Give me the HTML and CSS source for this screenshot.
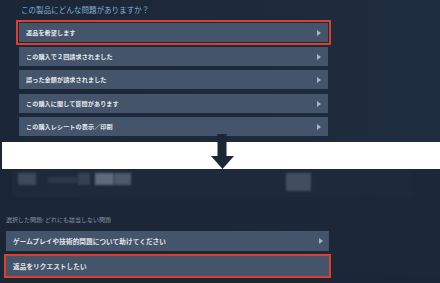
FILE: index.html
```html
<!DOCTYPE html>
<html lang="ja">
<head>
<meta charset="utf-8">
<link rel="stylesheet" href="styles.css">
</head>
<body>
<div class="page">
  <section class="top">
    <div class="title">この製品にどんな問題がありますか？</div>
    <div class="list">
      <div class="btn hl">返品を希望します<span class="tri"></span></div>
      <div class="btn">この購入で２回請求されました<span class="tri"></span></div>
      <div class="btn">誤った金額が請求されました<span class="tri"></span></div>
      <div class="btn">この購入に関して質問があります<span class="tri"></span></div>
      <div class="btn">この購入レシートの表示／印刷<span class="tri"></span></div>
    </div>
  </section>
  <div class="band">
    <svg class="arrow" width="24" height="36" viewBox="0 0 24 36">
      <rect x="6.5" y="0" width="9" height="24" fill="#1b2636"/>
      <polygon points="0,22 23,22 11.5,35" fill="#1b2636"/>
    </svg>
  </div>
  <section class="bottom">
    <div class="card">
      <span class="blur b1"></span>
      <span class="blur b2"></span>
      <span class="blur b3"></span>
      <span class="blur b4"></span>
      <span class="blur b5"></span>
      <span class="blur b6"></span>
    </div>
    <div class="label">選択した問題: どれにも該当しない問題</div>
    <div class="list2">
      <div class="btn wide">ゲームプレイや技術的問題について助けてください<span class="tri"></span></div>
      <div class="btn wide hl2">返品をリクエストしたい</div>
    </div>
  </section>
</div>
</body>
</html>
```
FILE: styles.css
```css
* { box-sizing: border-box; }
html, body { margin: 0; padding: 0; }
body {
  width: 440px;
  height: 283px;
  overflow: hidden;
  background: #1b2636;
  font-family: "Noto Sans CJK JP", "Noto Sans", sans-serif;
}
.page { display: flex; flex-direction: column; }
.top {
  height: 142px;
  padding: 4px 0 0 19px;
  background: linear-gradient(90deg, #1b2738 0%, #1d2a3c 60%, #1f2d40 100%);
}
.title {
  font-size: 7.5px;
  line-height: 12px;
  color: #86aed0;
  padding-left: 2px;
  letter-spacing: 0.05px;
}
.list {
  margin-top: 7px;
  display: flex;
  flex-direction: column;
  gap: 4.6px;
  width: 309px;
}
.btn {
  position: relative;
  height: 19px;
  background: #44546a;
  color: #e4e8ec;
  font-size: 6.1px;
  font-weight: 700;
  line-height: 19px;
  padding-left: 7px;
  letter-spacing: 0.1px;
}
.btn.hl { outline: 2px solid #dd3f2a; outline-offset: 1px; }
.tri {
  position: absolute;
  right: 7px;
  top: 7px;
  width: 0;
  height: 0;
  border-top: 3px solid transparent;
  border-bottom: 3px solid transparent;
  border-left: 4px solid #a9b6c3;
}
.band {
  position: relative;
  height: 27px;
  background: #ffffff;
  margin-left: 2px;
}
.arrow { position: absolute; left: 209px; top: -8px; }
.bottom {
  flex: 1;
  padding: 1px 0 0 0;
  background: linear-gradient(90deg, #1a2535 0%, #1c283a 100%);
}
.card {
  position: relative;
  margin-left: 12px;
  width: 400px;
  height: 27px;
  background: #1e2a3b;
}
.blur { position: absolute; filter: blur(1.2px); }
.b1 { left: 6px; top: 3px; width: 18px; height: 12px; background: #3d4a5c; }
.b2 { left: 36px; top: 7px; width: 30px; height: 6px; background: #2c394a; }
.b3 { left: 66px; top: 3px; width: 12px; height: 12px; background: #354254; }
.b4 { left: 83px; top: 3px; width: 19px; height: 12px; background: #5e6a7a; }
.b5 { left: 102px; top: 3px; width: 17px; height: 12px; background: #4d5a6b; }
.b6 { left: 274px; top: 3px; width: 25px; height: 18px; background: #414e60; }
.label {
  margin: 18px 0 0 6px;
  font-size: 6px;
  line-height: 10px;
  color: #8a97a6;
}
.list2 {
  margin: 6px 0 0 6px;
  display: flex;
  flex-direction: column;
  gap: 5px;
  width: 323px;
}
.btn.wide { height: 20px; line-height: 20px; font-size: 6.6px; padding-left: 7px; }
.btn.wide .tri { top: 7px; right: 6px; }
.btn.hl2 { outline: 2px solid #dd3f2a; outline-offset: 0px; }
```
